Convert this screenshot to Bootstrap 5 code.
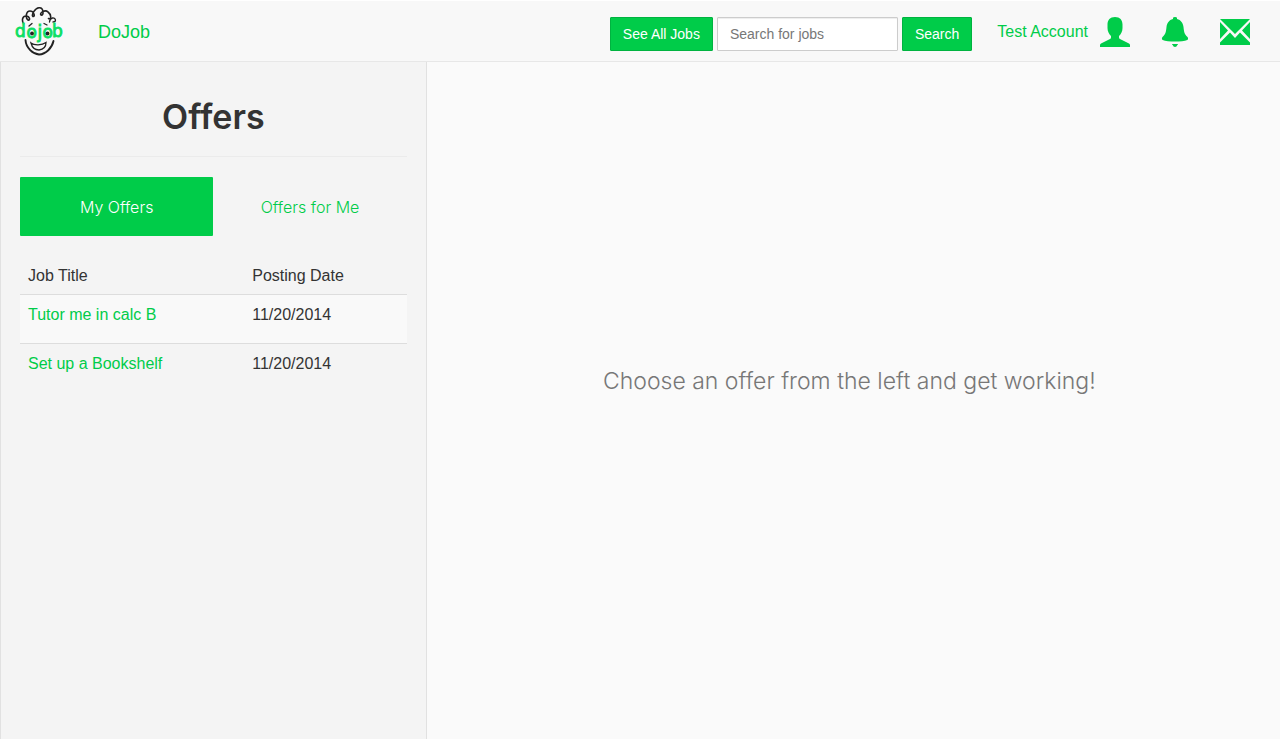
<!DOCTYPE html>
<html lang="en">
<head>
<meta charset="utf-8">
<meta name="viewport" content="width=device-width, initial-scale=1">
<title>DoJob - Offers</title>
<link href="https://cdn.jsdelivr.net/npm/bootstrap@5.3.0/dist/css/bootstrap.min.css" rel="stylesheet">
<style>
  :root { --brand: #00cc49; }
  body { font-family: "Liberation Sans", sans-serif; font-size: 16px; color: #333; background: #fafafa; }
  a { color: var(--brand); text-decoration: none; }
  a:hover { color: #009c38; }
  .topbar { background: #f8f8f8; border-top: 1px solid #fff; border-bottom: 1px solid #e7e7e7; height: 62px; padding: 2px 30px 0 15px; }
  .brand-name { font-size: 18px; margin-left: 35px; }
  .search-form { gap: 4px; margin: 3px 25px 0 0; }
  .btn-brand { --bs-btn-color: #fff; --bs-btn-bg: var(--brand); --bs-btn-border-color: #00b340; --bs-btn-hover-color: #fff; --bs-btn-hover-bg: #00b340; --bs-btn-hover-border-color: #009c38; --bs-btn-active-color: #fff; --bs-btn-active-bg: #009c38; --bs-btn-font-size: 14px; --bs-btn-line-height: 20px; --bs-btn-padding-y: 6px; --bs-btn-padding-x: 12px; --bs-btn-border-radius: 1px; white-space: nowrap; }
  .search-box { width: 181px; height: 34px; font-size: 14px; padding: 6px 12px; border-color: #ccc; border-radius: 1px; box-shadow: inset 0 1px 1px rgba(0,0,0,.075); }
  .search-box::placeholder { color: #777; }
  .account-links { gap: 30px; }
  .account-name { gap: 12px; }
  .icon { width: 30px; height: 30px; fill: currentColor; display: block; }
  .side { background: #f4f4f4; border: solid #e1e1e1; border-width: 0 1px; padding: 33px 19px; }
  .side h1 { font: 600 34px/44px Inter, sans-serif; margin: 0 0 17px; }
  .side hr { margin: 0 0 20px; border-color: #ebebeb; opacity: 1; }
  .light { font-family: Inter, sans-serif; font-weight: 300; }
  .offer-tabs { --bs-nav-pills-border-radius: 1px; --bs-nav-pills-link-active-bg: var(--brand); --bs-nav-link-color: var(--brand); --bs-nav-link-hover-color: #009c38; }
  .offer-tabs .nav-link { font-size: 16px; line-height: 29px; padding: 16px 15px 14px; }
  .offers { --bs-table-striped-bg: #f9f9f9; --bs-table-striped-color: #333; --bs-table-color: #333; --bs-table-bg: transparent; border-color: #ddd; margin: 20px 0 0; line-height: 22px; }
  .offers th { font-weight: 400; }
  .offers th:first-child { width: 58%; }
  .offers > :not(caption) > tr > * { padding: 9px 8px 7px; }
  .offers > tbody > tr > td { padding-bottom: 17px; }
  .offers > thead > tr > th { border-bottom: 1px solid #ddd; }
  .offers > tbody > tr:last-child > td { border-bottom: 0; }
  .hint-area { padding: 0 8px 38px 0; }
  .hint { font-size: 23px; color: #777; margin: 0; }
</style>
</head>
<body class="d-flex flex-column min-vh-100">
<nav class="topbar d-flex align-items-center">
  <a href="#" class="d-flex align-items-center" aria-label="DoJob home">
    <svg width="48" height="50" viewBox="15 7 48 50" fill="none" stroke="#222" stroke-width="1.6" stroke-linecap="round">
      <path d="M23.500 24C21.500 20 22.500 16 26 16C30 16 30.500 21 28 20C25 18 26 11 30 11C34 11 35.500 17 33 16.500C31 15 35 8 39 7.800C44 7.500 44 16 41 15C39 13 45 9 48 12C52 15 51 20 48.500 18.500"/>
      <path d="M49.500 22C50 17 55 17 55.500 20Q55.500 22 53 22M29 26L32 23.500M44 23.500L47 25" stroke-width="1.300"/>
      <path d="M25.500 40C26 48 33 54 39 54.500C46 54 52 48 53.500 41" stroke-width="1.900"/>
      <path d="M31 43C34 45.500 42 45.500 46 42.500C46 47 43 49.500 39 50C35 50 32 47 31 43Z" stroke-width="1.300"/>
      <g fill="#0ddf63" stroke="#0ddf63" stroke-width="0.900" font-family="DejaVu Sans" font-size="17">
        <text x="15 26.500 37.500 42.500 52" y="37 38 38 38 37">dojob</text>
      </g>
      <g fill="#222" stroke="none"><circle cx="32" cy="33.500" r="1.900"/><circle cx="47.500" cy="33.500" r="1.900"/></g>
    </svg>
  </a>
  <a href="#" class="brand-name">DoJob</a>
  <form class="search-form d-flex ms-auto" role="search">
    <button type="button" class="btn btn-brand">See All Jobs</button>
    <input type="search" class="form-control search-box" placeholder="Search for jobs" aria-label="Search for jobs">
    <button type="submit" class="btn btn-brand">Search</button>
  </form>
  <div class="account-links d-flex align-items-center">
    <a href="#" class="account-name d-flex align-items-center">Test Account
      <svg class="icon" viewBox="0 0 30 30"><path d="M15 0c5 0 7.500 3 7.500 7.500V11c0 3.500-1.500 6-3.500 8v1.500c0 .8.500 1.300 1.500 1.800L29 26.500q1 .5 1 1.500v2H0v-2q0-1 1-1.500l8.500-4.200c1-.5 1.500-1 1.500-1.800V19c-2-2-3.500-4.500-3.500-8V7.500C7.500 3 10 0 15 0z"/></svg>
    </a>
    <a href="#" aria-label="Notifications"><svg class="icon" viewBox="0 0 30 30"><path d="M13 2V1q0-1 2-1t2 1v1c4 1 6 4 6.500 8 .5 5 1 7.500 4 10 .8.700.8 2.500-.2 3-5 2-19.600 2-24.600 0-1-.5-1-2.300-.2-3 3-2.500 3.500-5 4-10C7 6 9 3 13 2zM12 27h6c0 1-1 1-1 1.500S16 30 15 30s-2-1-2-1.500-1-.5-1-1.500z"/></svg></a>
    <a href="#" aria-label="Messages"><svg class="icon" viewBox="0 0 30 30"><path d="M0 2h30L18 14l-3 3-3-3zM0 5l8 8.500L0 22zM30 5v17l-8-8.500zM10 15.500l5 5.500 5-5.500L30 25.500V28H0v-2.500z"/></svg></a>
  </div>
</nav>
<div class="container-fluid flex-grow-1 d-flex p-0">
  <div class="row g-0 flex-grow-1">
    <aside class="col-4 side">
      <h1 class="text-center">Offers</h1>
      <hr>
      <ul class="nav nav-pills nav-justified offer-tabs light">
        <li class="nav-item"><a class="nav-link active" href="#">My Offers</a></li>
        <li class="nav-item"><a class="nav-link" href="#">Offers for Me</a></li>
      </ul>
      <table class="table table-striped offers">
        <thead><tr><th scope="col">Job Title</th><th scope="col">Posting Date</th></tr></thead>
        <tbody>
          <tr><td><a href="#">Tutor me in calc B</a></td><td>11/20/2014</td></tr>
          <tr><td><a href="#">Set up a Bookshelf</a></td><td>11/20/2014</td></tr>
        </tbody>
      </table>
    </aside>
    <main class="col-8 hint-area d-flex align-items-center justify-content-center">
      <p class="hint light">Choose an offer from the left and get working!</p>
    </main>
  </div>
</div>
<script src="https://cdn.jsdelivr.net/npm/bootstrap@5.3.0/dist/js/bootstrap.bundle.min.js"></script>
</body>
</html>
